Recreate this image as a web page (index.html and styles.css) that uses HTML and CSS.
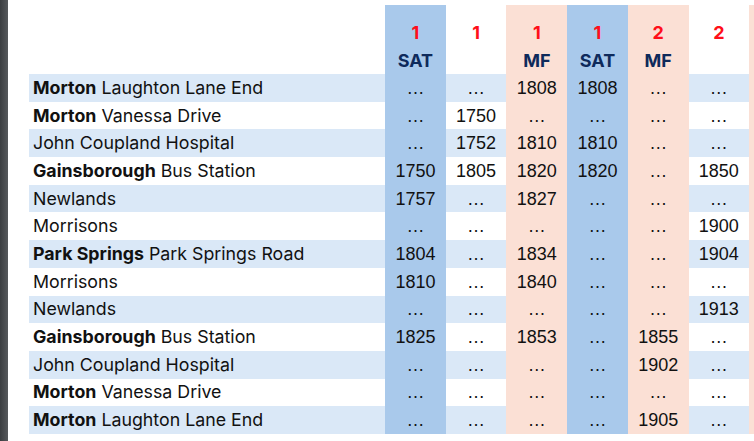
FILE: index.html
```html
<!DOCTYPE html>
<html>
<head>
<meta charset="utf-8">
<link rel="stylesheet" href="styles.css">
</head>
<body>
<div class="page">
  <div class="edge"></div>
  <div class="sheet">
    <table class="tt">
      <colgroup>
        <col class="c-stop">
        <col class="c-t"><col class="c-t"><col class="c-t"><col class="c-t"><col class="c-t"><col class="c-t"><col class="c-t">
      </colgroup>
      <thead>
        <tr>
          <th class="stop-h"></th>
          <th class="blue"><div class="hl red">1</div><div class="hl navy">SAT</div></th>
          <th class="plain"><div class="hl red">1</div><div class="hl navy"></div></th>
          <th class="peach"><div class="hl red">1</div><div class="hl navy">MF</div></th>
          <th class="blue"><div class="hl red">1</div><div class="hl navy">SAT</div></th>
          <th class="peach"><div class="hl red">2</div><div class="hl navy">MF</div></th>
          <th class="plain"><div class="hl red">2</div><div class="hl navy"></div></th>
          <th class="peach"></th>
        </tr>
      </thead>
      <tbody>
        <tr class="odd"><td class="stop"><b>Morton</b> Laughton Lane End</td><td class="blue">…</td><td class="plain">…</td><td class="peach">1808</td><td class="blue">1808</td><td class="peach">…</td><td class="plain">…</td><td class="peach"></td></tr>
        <tr><td class="stop"><b>Morton</b> Vanessa Drive</td><td class="blue">…</td><td class="plain">1750</td><td class="peach">…</td><td class="blue">…</td><td class="peach">…</td><td class="plain">…</td><td class="peach"></td></tr>
        <tr class="odd"><td class="stop">John Coupland Hospital</td><td class="blue">…</td><td class="plain">1752</td><td class="peach">1810</td><td class="blue">1810</td><td class="peach">…</td><td class="plain">…</td><td class="peach"></td></tr>
        <tr><td class="stop"><b>Gainsborough</b> Bus Station</td><td class="blue">1750</td><td class="plain">1805</td><td class="peach">1820</td><td class="blue">1820</td><td class="peach">…</td><td class="plain">1850</td><td class="peach"></td></tr>
        <tr class="odd"><td class="stop">Newlands</td><td class="blue">1757</td><td class="plain">…</td><td class="peach">1827</td><td class="blue">…</td><td class="peach">…</td><td class="plain">…</td><td class="peach"></td></tr>
        <tr><td class="stop">Morrisons</td><td class="blue">…</td><td class="plain">…</td><td class="peach">…</td><td class="blue">…</td><td class="peach">…</td><td class="plain">1900</td><td class="peach"></td></tr>
        <tr class="odd"><td class="stop"><b>Park Springs</b> Park Springs Road</td><td class="blue">1804</td><td class="plain">…</td><td class="peach">1834</td><td class="blue">…</td><td class="peach">…</td><td class="plain">1904</td><td class="peach"></td></tr>
        <tr><td class="stop">Morrisons</td><td class="blue">1810</td><td class="plain">…</td><td class="peach">1840</td><td class="blue">…</td><td class="peach">…</td><td class="plain">…</td><td class="peach"></td></tr>
        <tr class="odd"><td class="stop">Newlands</td><td class="blue">…</td><td class="plain">…</td><td class="peach">…</td><td class="blue">…</td><td class="peach">…</td><td class="plain">1913</td><td class="peach"></td></tr>
        <tr><td class="stop"><b>Gainsborough</b> Bus Station</td><td class="blue">1825</td><td class="plain">…</td><td class="peach">1853</td><td class="blue">…</td><td class="peach">1855</td><td class="plain">…</td><td class="peach"></td></tr>
        <tr class="odd"><td class="stop">John Coupland Hospital</td><td class="blue">…</td><td class="plain">…</td><td class="peach">…</td><td class="blue">…</td><td class="peach">1902</td><td class="plain">…</td><td class="peach"></td></tr>
        <tr><td class="stop"><b>Morton</b> Vanessa Drive</td><td class="blue">…</td><td class="plain">…</td><td class="peach">…</td><td class="blue">…</td><td class="peach">…</td><td class="plain">…</td><td class="peach"></td></tr>
        <tr class="odd"><td class="stop"><b>Morton</b> Laughton Lane End</td><td class="blue">…</td><td class="plain">…</td><td class="peach">…</td><td class="blue">…</td><td class="peach">1905</td><td class="plain">…</td><td class="peach"></td></tr>
      </tbody>
    </table>
  </div>
</div>
</body>
</html>
```

FILE: styles.css
```css
html, body {
  margin: 0;
  padding: 0;
  background: #ffffff;
  overflow: hidden;
}
.page {
  display: flex;
  width: 754px;
  height: 441px;
  overflow: hidden;
}
.edge {
  width: 8px;
  flex: none;
  background: linear-gradient(to right, #3b3e41, #56595c);
}
.sheet {
  flex: none;
  padding: 5px 0 0 21px;
}
.tt {
  border-collapse: collapse;
  border-spacing: 0;
  table-layout: fixed;
  width: 781px;
  font-family: "Liberation Sans", Arial, sans-serif;
  color: #111111;
}
.c-stop { width: 356px; }
.c-t { width: 60.7px; }
.tt th, .tt td {
  padding: 0;
  text-align: center;
}
.tt thead th {
  height: 69px;
  vertical-align: bottom;
}
.hl {
  height: 27.3px;
  line-height: 27.3px;
  font-family: Inter, "Liberation Sans", sans-serif;
  font-weight: 700;
  font-size: 18px;
}
.red { color: #ff0f1a; }
.navy { color: #0e2a5b; }
.tt tbody td {
  height: 27.7px;
  font-size: 18px;
  line-height: 20px;
  vertical-align: middle;
}
.tt tbody td.stop {
  text-align: left;
  padding-left: 4px;
  font-family: Inter, "Liberation Sans", sans-serif;
  font-size: 17.8px;
  white-space: nowrap;
}
.stop b { font-weight: 700; }
.tt tr.odd td.stop,
.tt tr.odd td.plain { background: #dae8f7; }
.tt .blue { background: #a9c9eb; }
.tt .peach { background: #fbe0d5; }
```
